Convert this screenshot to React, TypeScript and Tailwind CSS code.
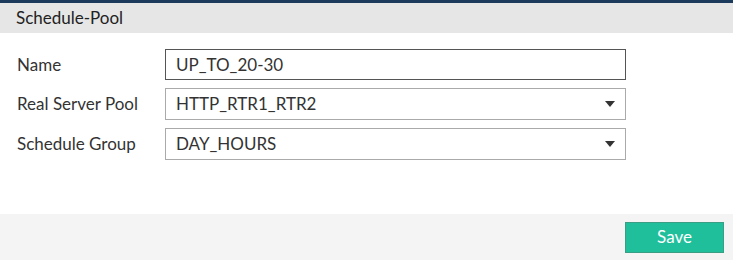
import React from "react";

function Caret() {
  return (
    <svg width="10" height="6" viewBox="0 0 10 6" className="shrink-0">
      <path d="M0 0 H10 L5 6 Z" fill="#333" />
    </svg>
  );
}

export default function App() {
  return (
    <div className="w-[733px] h-[274px] bg-white text-[#333]" style={{ fontFamily: "Lato, 'Open Sans', sans-serif" }}>
      <div className="h-[3px] bg-[#1b3a5c]" />
      <div className="h-[30px] bg-[#e6e6e6] flex items-center pl-4 text-[17px] text-[#222]">Schedule-Pool</div>
      <div className="h-[181px] pt-4 pl-[17px] flex flex-col gap-[8px]">
        <div className="flex items-center">
          <div className="w-[148px] text-[17px]">Name</div>
          <div className="w-[461px] h-[31px] border border-[#555] flex items-center pl-[10px] text-[17px]">UP_TO_20-30</div>
        </div>
        <div className="flex items-center">
          <div className="w-[148px] text-[17px]">Real Server Pool</div>
          <div className="w-[461px] h-[32px] border border-[#aaa] flex items-center justify-between pl-[10px] pr-[10px] text-[17px]">
            <span>HTTP_RTR1_RTR2</span>
            <Caret />
          </div>
        </div>
        <div className="flex items-center">
          <div className="w-[148px] text-[17px]">Schedule Group</div>
          <div className="w-[461px] h-[32px] border border-[#aaa] flex items-center justify-between pl-[10px] pr-[10px] text-[17px]">
            <span>DAY_HOURS</span>
            <Caret />
          </div>
        </div>
      </div>
      <div className="h-[46px] bg-[#f4f4f4] flex items-center justify-end pr-[9px]">
        <button className="w-[99px] h-[31px] bg-[#1fbf9c] border border-[#3a9e84] text-white text-[17px]">Save</button>
      </div>
    </div>
  );
}
